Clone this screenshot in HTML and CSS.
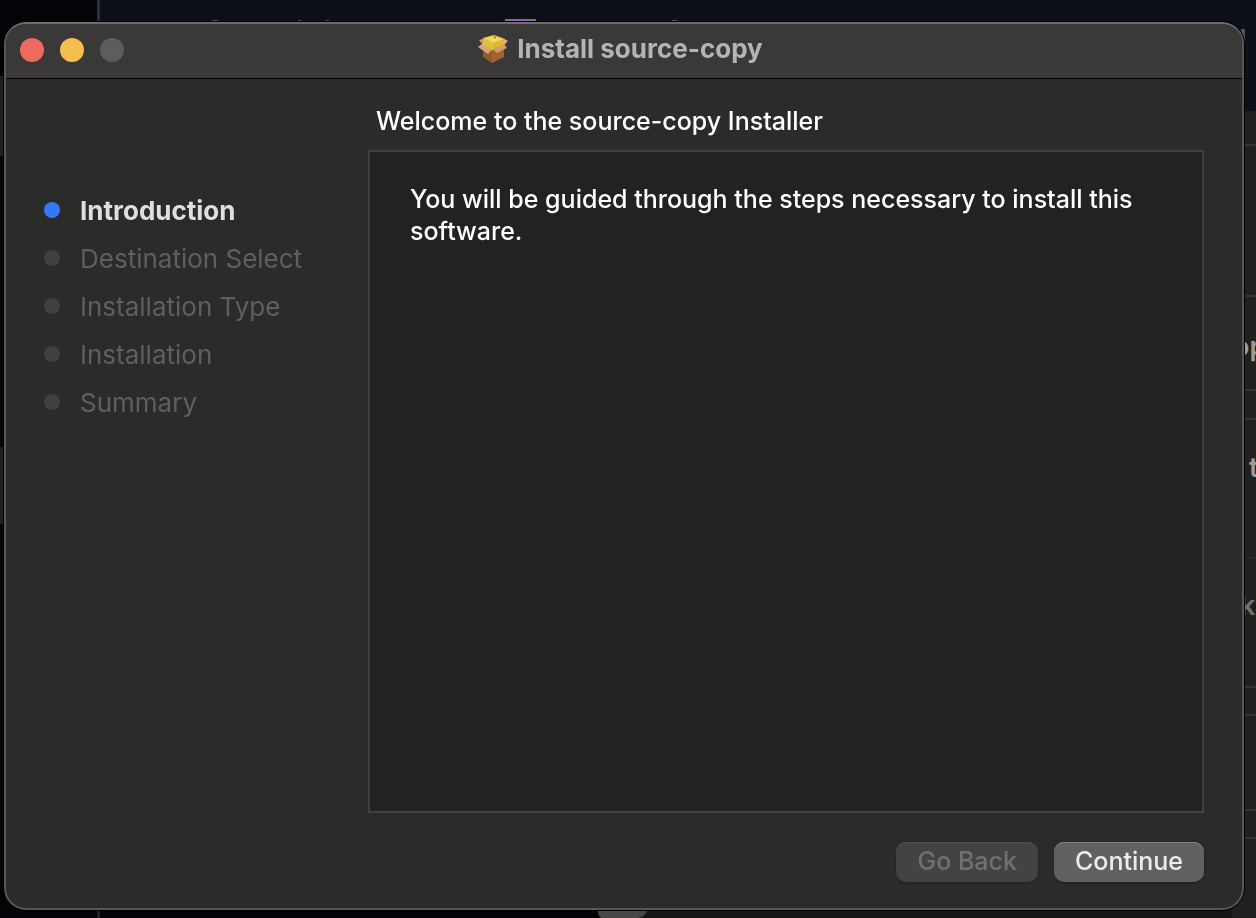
FILE: index.html
```html
<!DOCTYPE html>
<html lang="en">
<head>
<meta charset="utf-8">
<title>Install source-copy</title>
<link rel="stylesheet" href="styles.css">
</head>
<body>
<svg class="backdrop backdrop-main" aria-hidden="true">
  <rect x="0" y="0" width="100%" height="100%" fill="#030408"/>
  <rect x="98" y="0" width="100%" height="22" fill="#0d1117"/>
  <rect x="0" y="76" width="3" height="80" fill="#1d2024"/>
  <rect x="0" y="447" width="3" height="77" fill="#1d2024"/>
  <rect x="97" y="0" width="3" height="22" fill="#2b2f36"/>
  <rect x="97" y="908" width="3" height="20" fill="#202226"/>
  <rect x="600" y="908" width="100%" height="20" fill="#151514"/>
  <rect x="505" y="19" width="31" height="2" fill="#8a63a8"/>
  <rect x="212" y="20" width="6" height="1" fill="#4c5056"/>
  <rect x="298" y="20" width="3" height="1" fill="#4c5056"/>
  <rect x="326" y="20" width="3" height="1" fill="#4c5056"/>
  <rect x="672" y="20" width="5" height="1" fill="#4c5056"/>
  <path d="M598 908H648Q646 917 638 918H604Q598 918 598 912Z" fill="#474749"/>
</svg>
<svg class="backdrop backdrop-side" aria-hidden="true">
  <rect x="0" y="0" width="24" height="111" fill="#0d1117"/>
  <rect x="0" y="111" width="24" height="100%" fill="#20201f"/>
  <path d="M9 29h4v25h-2V34h-2z" fill="#50545d"/>
  <path d="M8 145h16M8 296h16M8 390h16M8 419h16M8 687h16M8 715h16M8 810h16M8 838h16" stroke="#343433" stroke-width="2"/>
  <path d="M8 558h16" stroke="#292928" stroke-width="2"/>
  <text class="backdrop-text" x="1" y="356">op</text>
  <text class="backdrop-text" x="17" y="477">t</text>
  <text class="backdrop-text backdrop-dim" x="8" y="615">k</text>
</svg>
<main class="window">
  <header class="titlebar">
    <div class="controls">
      <button class="control close" type="button" aria-label="Close"></button>
      <button class="control minimize" type="button" aria-label="Minimize"></button>
      <button class="control zoom" type="button" aria-label="Zoom" disabled></button>
    </div>
    <div class="title">
      <svg class="box-icon" viewBox="0 0 32 30" aria-hidden="true">
        <path d="M6 13 15 18V29L6 23Z" fill="#8f5a2e"/>
        <path d="M15 18 27 13V23L15 29Z" fill="#a06430"/>
        <path d="M6 5 18 2 27 6 28 12 15 18 5 12Z" fill="#a88520"/>
        <path d="M6 4 17 1 28 5 16 10Z" fill="#efd052"/>
        <path d="M6 4 16 10V16L5 11Z" fill="#e3c03c"/>
        <path d="M16 10 28 5 27 11 16 16Z" fill="#dcb934"/>
        <path d="M10 5 17 3 24 5 16 8Z" fill="#f1d964"/>
        <path d="M16 3 19 1 19 5Z" fill="#ad9228"/>
        <path d="M27 5 31 7 27 11Z" fill="#e4b282"/>
        <path d="M6 5 2 6 5 10Z" fill="#d6a071"/>
        <path d="M5 10 15 15 11 20 1 13Z" fill="#dda676"/>
        <path d="M16 15 27 10 30 14 20 19Z" fill="#d69a68"/>
      </svg>
      <h1 class="title-text">Install source-copy</h1>
    </div>
  </header>
  <div class="content">
    <nav class="sidebar" aria-label="Installation steps">
      <ol class="steps">
        <li class="step active" aria-current="step">Introduction</li>
        <li class="step">Destination Select</li>
        <li class="step">Installation Type</li>
        <li class="step">Installation</li>
        <li class="step">Summary</li>
      </ol>
    </nav>
    <section class="pane">
      <h2 class="heading">Welcome to the source-copy Installer</h2>
      <div class="panel">
        <p class="message">You will be guided through the steps necessary to install this software.</p>
      </div>
      <div class="actions">
        <button class="button" type="button" disabled>Go Back</button>
        <button class="button primary" type="button">Continue</button>
      </div>
    </section>
  </div>
</main>
</body>
</html>
```
FILE: styles.css
```css
* {
  box-sizing: border-box;
}

body {
  display: flex;
  min-height: 100vh;
  margin: 0;
  padding: 22px 12px 8px 4px;
  background: #030408;
  color: #fff;
  font-family: Inter, "Liberation Sans", sans-serif;
  font-size: 25px;
  font-optical-sizing: none;
  font-weight: 500;
  line-height: 32px;
}

.backdrop {
  position: fixed;
  top: 0;
  height: 100%;
}

.backdrop-main {
  left: 0;
  width: 100%;
}

.backdrop-side {
  right: 0;
  width: 24px;
}

.backdrop-text {
  fill: #a3a3a3;
  font-size: 27px;
  font-weight: 600;
  opacity: 0.95;
}

.backdrop-dim {
  fill: #777;
}

.window {
  position: relative;
  display: flex;
  flex: 1;
  flex-direction: column;
  overflow: hidden;
  border: 2px solid #575756;
  border-top-color: #6d6c6b;
  border-radius: 22px;
  background: #2b2b29;
  box-shadow: 0 0 0 1px #000;
}

.titlebar {
  display: grid;
  grid-template-columns: 1fr auto 1fr;
  align-items: center;
  height: 55px;
  padding: 0 14px 2px;
  border-bottom: 1px solid #000;
  background: #3b3937;
}

.controls {
  display: flex;
  gap: 16px;
}

.control {
  width: 24px;
  height: 24px;
  padding: 0;
  border: 0;
  border-radius: 50%;
}

.close {
  background: #ed6a5e;
}

.minimize {
  background: #f5bf4f;
}

.zoom {
  background: #5e5d5b;
}

.title {
  display: flex;
  align-items: center;
  gap: 8px;
  padding: 0 8px 2px 0;
}

.box-icon {
  width: 32px;
  height: 30px;
}

.title-text {
  margin: 0;
  color: #b6b4b2;
  font-size: 26px;
  font-weight: 700;
}

.content {
  display: flex;
  flex: 1;
}

.sidebar {
  flex: 0 0 362px;
  padding: 108px 0 0 38px;
}

.steps {
  margin: 0;
  padding: 0;
  font-size: 26px;
  font-weight: 400;
  list-style: none;
}

.step {
  display: flex;
  align-items: center;
  gap: 20px;
  height: 48px;
  color: #5f5f5e;
}

.step::before {
  width: 16px;
  height: 16px;
  margin-bottom: 2px;
  border-radius: 50%;
  background: #40403f;
  content: "";
}

.active {
  color: #dfdfde;
  font-weight: 700;
}

.active::before {
  background: #3478f6;
}

.pane {
  display: flex;
  flex: 1;
  flex-direction: column;
  padding: 26px 38px 26px 0;
}

.heading {
  margin: 0 0 13px;
  padding-left: 8px;
  font-size: 25px;
  font-weight: 500;
}

.panel {
  flex: 1;
  padding: 31px 40px;
  border: 2px solid #40403f;
  background: #222220;
}

.message {
  margin: 0;
}

.actions {
  display: flex;
  justify-content: flex-end;
  gap: 16px;
  margin-top: 29px;
}

.button {
  height: 40px;
  padding: 0 21px 2px;
  border: 0;
  border-radius: 10px;
  background: #434342;
  box-shadow: inset 0 1px #50504f, 0 1px 2px #20201f;
  color: #70706f;
  font: inherit;
}

.primary {
  background: #616160;
  box-shadow: inset 0 1px #858584, 0 1px 2px #1c1c1b;
  color: #ececeb;
}
```
